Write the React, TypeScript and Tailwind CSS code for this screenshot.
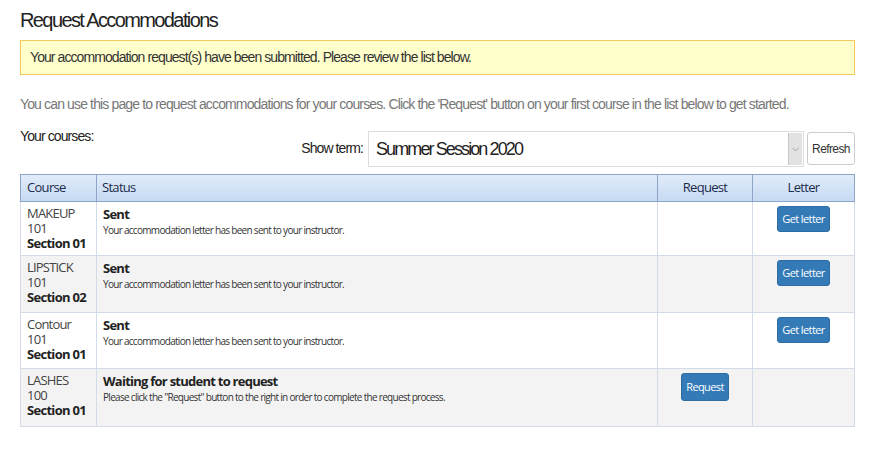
import React from "react";

const rows = [
  { name: "MAKEUP", num: "101", sec: "Section 01", status: "Sent", desc: "Your accommodation letter has been sent to your instructor.", req: false, letter: true, alt: false, h: "h-[54px]" },
  { name: "LIPSTICK", num: "101", sec: "Section 02", status: "Sent", desc: "Your accommodation letter has been sent to your instructor.", req: false, letter: true, alt: true, h: "h-[57px]" },
  { name: "Contour", num: "101", sec: "Section 01", status: "Sent", desc: "Your accommodation letter has been sent to your instructor.", req: false, letter: true, alt: false, h: "h-[56px]" },
  { name: "LASHES", num: "100", sec: "Section 01", status: "Waiting for student to request", desc: "Please click the \"Request\" button to the right in order to complete the request process.", req: true, letter: false, alt: true, h: "h-[58px]" },
];

export default function App() {
  return (
    <div className="w-[869px] h-[450px] bg-white px-[20px] pt-[8px] text-[#333]" style={{ fontFamily: '"Liberation Sans", Arial, sans-serif' }}>
      <h1 className="text-[20px] leading-[24px] tracking-[-1.6px] text-[#222]">Request Accommodations</h1>
      <div className="mt-[8px] w-[835px] h-[35px] bg-[#ffffcc] border border-[#f7c85c] flex items-center pl-[9px] text-[14px] tracking-[-0.92px] text-[#333]">
        Your accommodation request(s) have been submitted. Please review the list below.
      </div>
      <p className="mt-[20px] text-[14px] leading-[18px] tracking-[-0.86px] text-[#777]">
        You can use this page to request accommodations for your courses. Click the 'Request' button on your first course in the list below to get started.
      </p>
      <div className="flex w-[835px] mt-[9px] h-[52px]">
        <div className="text-[14px] tracking-[-0.9px] text-[#222] pt-[4px]">Your courses:</div>
        <div className="ml-auto flex items-start pt-[9px]">
          <span className="text-[14px] tracking-[-0.9px] text-[#222] mt-[7px] mr-[5px]">Show term:</span>
          <div className="w-[436px] h-[36px] border border-[#ddd] flex items-stretch">
            <span className="flex-1 flex items-center pl-[7px] text-[18px] tracking-[-1.9px] text-[#222]">Summer Session 2020</span>
            <span className="w-[14px] my-[1px] mr-[1px] bg-[#e2e2e2] border-l border-[#c8c8c8] flex items-center justify-center">
              <svg width="7" height="5" viewBox="0 0 7 5"><path d="M0.5 1 L3.5 4 L6.5 1" fill="none" stroke="#999" strokeWidth="0.9" /></svg>
            </span>
          </div>
          <button className="ml-[3px] mt-[1px] w-[48px] h-[33px] border border-[#ccc] rounded-[3px] bg-white text-[12px] tracking-[-0.6px] text-[#333]">Refresh</button>
        </div>
      </div>
      <table className="w-[835px] border-collapse border border-[#809ec8] text-[13px]" style={{ fontFamily: '"Open Sans", "Noto Sans", sans-serif' }}>
        <thead>
          <tr className="h-[27px] bg-gradient-to-b from-[#e1ecf9] to-[#c4d9f3] text-[#1b2b4b]">
            <th className="w-[76px] border border-[#8da6c8] text-left font-normal pl-[6px] tracking-[-0.7px]">Course</th>
            <th className="border border-[#8da6c8] text-left font-normal pl-[5px] tracking-[-0.7px]">Status</th>
            <th className="w-[95px] border border-[#8da6c8] font-normal tracking-[-0.7px]">Request</th>
            <th className="w-[102px] border border-[#8da6c8] font-normal tracking-[-0.7px]">Letter</th>
          </tr>
        </thead>
        <tbody>
          {rows.map((r, i) => (
            <tr key={i} className={`${r.h} ${r.alt ? "bg-[#f3f3f3]" : "bg-white"}`}>
              <td className="align-top border border-[#d3dbe9] pl-[6px] pt-[4px] pb-[1px] text-[13px] leading-[15px] tracking-[-0.8px] text-[#444]">
                <div>{r.name}</div>
                <div>{r.num}</div>
                <div className="font-bold text-[#222] tracking-[-0.7px]">{r.sec}</div>
              </td>
              <td className="align-top border border-[#d3dbe9] pl-[6px] pt-[4px]">
                <div className="font-bold text-[13px] leading-[16px] tracking-[-0.75px] text-[#222]">{r.status}</div>
                <div className="mt-[2px] text-[10px] leading-[13px] tracking-[-0.7px] text-[#333]">{r.desc}</div>
              </td>
              <td className="align-top border border-[#d3dbe9] text-center pt-[4px]">
                {r.req && (
                  <button className="w-[48px] h-[28px] rounded-[3px] bg-[#337ab7] border border-[#2e6da4] text-white text-[11px] tracking-[-0.6px]">Request</button>
                )}
              </td>
              <td className="align-top border border-[#d3dbe9] text-center pt-[4px]">
                {r.letter && (
                  <button className="w-[53px] h-[26px] rounded-[3px] bg-[#337ab7] border border-[#2e6da4] text-white text-[11px] tracking-[-0.6px]">Get letter</button>
                )}
              </td>
            </tr>
          ))}
        </tbody>
      </table>
    </div>
  );
}
